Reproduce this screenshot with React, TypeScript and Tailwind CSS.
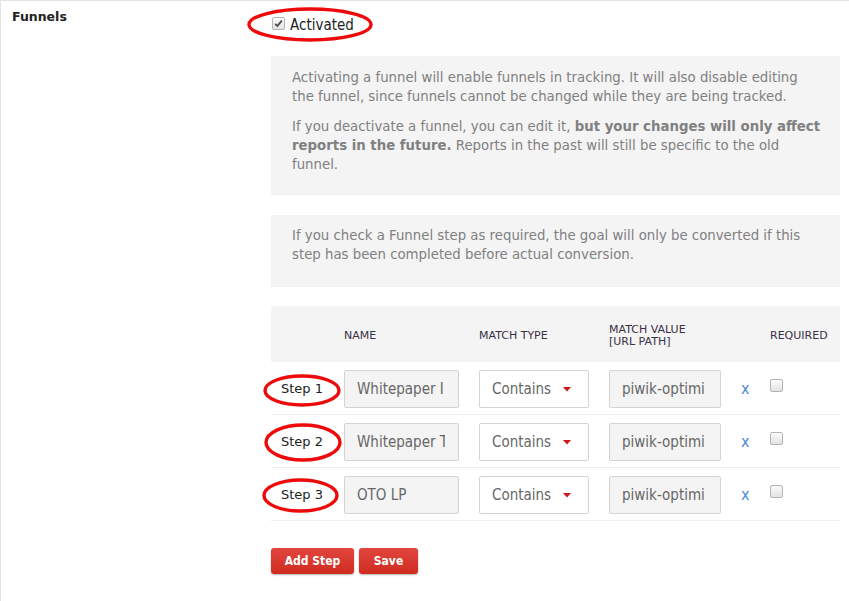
import React from "react";

const cond = { fontFamily: '"DejaVu Sans Condensed", "DejaVu Sans", Verdana, sans-serif' };
const reg = { fontFamily: '"DejaVu Sans", Verdana, sans-serif' };

function Ellipse({ w, h, className }: { w: number; h: number; className: string }) {
  return (
    <svg
      className={"pointer-events-none absolute " + className}
      width={w}
      height={h}
      viewBox={`0 0 ${w} ${h}`}
    >
      <ellipse cx={w / 2} cy={h / 2} rx={w / 2 - 2} ry={h / 2 - 2} fill="none" stroke="#ee0a0a" strokeWidth="3.4" />
    </svg>
  );
}

function Checkbox({ checked }: { checked?: boolean }) {
  return (
    <span className="inline-flex h-[13px] w-[13px] items-center justify-center rounded-[2px] border border-[#b4b4b4] bg-gradient-to-b from-[#fbfbfb] to-[#e3e3e3]">
      {checked && (
        <svg width="9" height="9" viewBox="0 0 9 9">
          <path d="M1.2 4.8 L3.4 7 L7.8 1.6" fill="none" stroke="#4a4a4a" strokeWidth="1.8" />
        </svg>
      )}
    </span>
  );
}

const rows = [
  { step: "Step 1", name: "Whitepaper I", ell: "left-[-8px] top-[4px]", w: 78, h: 33 },
  { step: "Step 2", name: "Whitepaper T", ell: "left-[-7px] top-[0px]", w: 78, h: 39 },
  { step: "Step 3", name: "OTO LP", ell: "left-[-9px] top-[2px]", w: 77, h: 35 },
];

export default function App() {
  return (
    <div style={cond} className="h-[601px] w-[849px] overflow-hidden bg-white">
      <div className="flex h-full border-l border-t border-[#e4e4e4]">
        <div style={reg} className="w-[270px] shrink-0 pl-[11px] pt-[7px] text-[12.5px] font-bold text-[#222]">
          Funnels
        </div>
        <div className="w-[569px] shrink-0">
          <div className="relative mt-[14px] flex h-[20px] items-center">
            <Ellipse w={126} h={35} className="left-[-24px] top-[-8px]" />
            <span className="ml-[1px] mt-[-4px]">
              <Checkbox checked />
            </span>
            <span className="ml-[5px] text-[15px] leading-[20px] text-[#222]">Activated</span>
          </div>
          <div
            style={reg}
            className="mt-[21px] h-[139px] whitespace-nowrap bg-[#f4f4f4] pl-[21px] pt-[12px] text-[13.3px] leading-[19px] text-[#808080]"
          >
            <p>
              Activating a funnel will enable funnels in tracking. It will also disable editing
              <br />
              the funnel, since funnels cannot be changed while they are being tracked.
            </p>
            <p className="mt-[11px]">
              If you deactivate a funnel, you can edit it, <b>but your changes will only affect</b>
              <br />
              <b>reports in the future.</b> Reports in the past will still be specific to the old
              <br />
              funnel.
            </p>
          </div>
          <div
            style={reg}
            className="mt-[20px] h-[72px] whitespace-nowrap bg-[#f4f4f4] pl-[21px] pt-[12px] text-[13.3px] leading-[18.5px] text-[#808080]"
          >
            <p>
              If you check a Funnel step as required, the goal will only be converted if this
              <br />
              step has been completed before actual conversion.
            </p>
          </div>
          <div className="mt-[19px]">
            <div
              style={reg}
              className="flex h-[56px] items-center bg-[#f4f4f4] pt-[4px] text-[11px] leading-[12px] text-[#3a2f44]"
            >
              <div className="w-[73px]" />
              <div className="w-[135px]">NAME</div>
              <div className="w-[130px]">MATCH TYPE</div>
              <div className="w-[161px]">
                MATCH VALUE
                <br />
                [URL PATH]
              </div>
              <div>REQUIRED</div>
            </div>
            {rows.map((r) => (
              <div key={r.step} className="flex h-[53px] items-start border-b border-[#ececec] pt-[8px]">
                <div
                  style={reg}
                  className="relative flex h-[38px] w-[73px] items-center pl-[10px] text-[13px] text-[#222]"
                >
                  <Ellipse w={r.w} h={r.h} className={r.ell} />
                  {r.step}
                </div>
                <div className="w-[135px]">
                  <input
                    readOnly
                    value={r.name}
                    className="h-[38px] w-[115px] rounded-[2px] border border-[#d4d4d4] bg-[#f4f4f4] pl-[12px] pr-[13px] text-[15px] text-[#666] outline-none"
                    style={cond}
                  />
                </div>
                <div className="w-[130px]">
                  <div className="flex h-[38px] w-[110px] items-center rounded-[2px] border border-[#d4d4d4] bg-white pl-[12px] text-[15px] text-[#666]">
                    <span>Contains</span>
                    <svg className="ml-[12px]" width="8" height="5" viewBox="0 0 8 5">
                      <path d="M0 0 L8 0 L4 4.5 Z" fill="#d0141c" />
                    </svg>
                  </div>
                </div>
                <div className="w-[131px]">
                  <input
                    readOnly
                    value="piwik-optimization"
                    className="h-[38px] w-[112px] rounded-[2px] border border-[#d4d4d4] bg-[#f4f4f4] pl-[12px] pr-[15px] text-[15px] text-[#666] outline-none"
                    style={cond}
                  />
                </div>
                <div className="flex h-[38px] w-[30px] items-center pl-[1px] text-[16px] text-[#4a8ad6]">x</div>
                <div className="flex h-[38px] items-center pb-[7px]">
                  <Checkbox />
                </div>
              </div>
            ))}
          </div>
          <div className="mt-[27px] flex gap-[5px]">
            <button
              style={cond}
              className="h-[26px] w-[83px] rounded-[3px] bg-gradient-to-b from-[#e2453d] to-[#d02a1f] text-[12px] font-bold text-white shadow-[0_1px_2px_rgba(0,0,0,0.3)]"
            >
              Add Step
            </button>
            <button
              style={cond}
              className="h-[26px] w-[59px] rounded-[3px] bg-gradient-to-b from-[#e2453d] to-[#d02a1f] text-[12px] font-bold text-white shadow-[0_1px_2px_rgba(0,0,0,0.3)]"
            >
              Save
            </button>
          </div>
        </div>
      </div>
    </div>
  );
}
